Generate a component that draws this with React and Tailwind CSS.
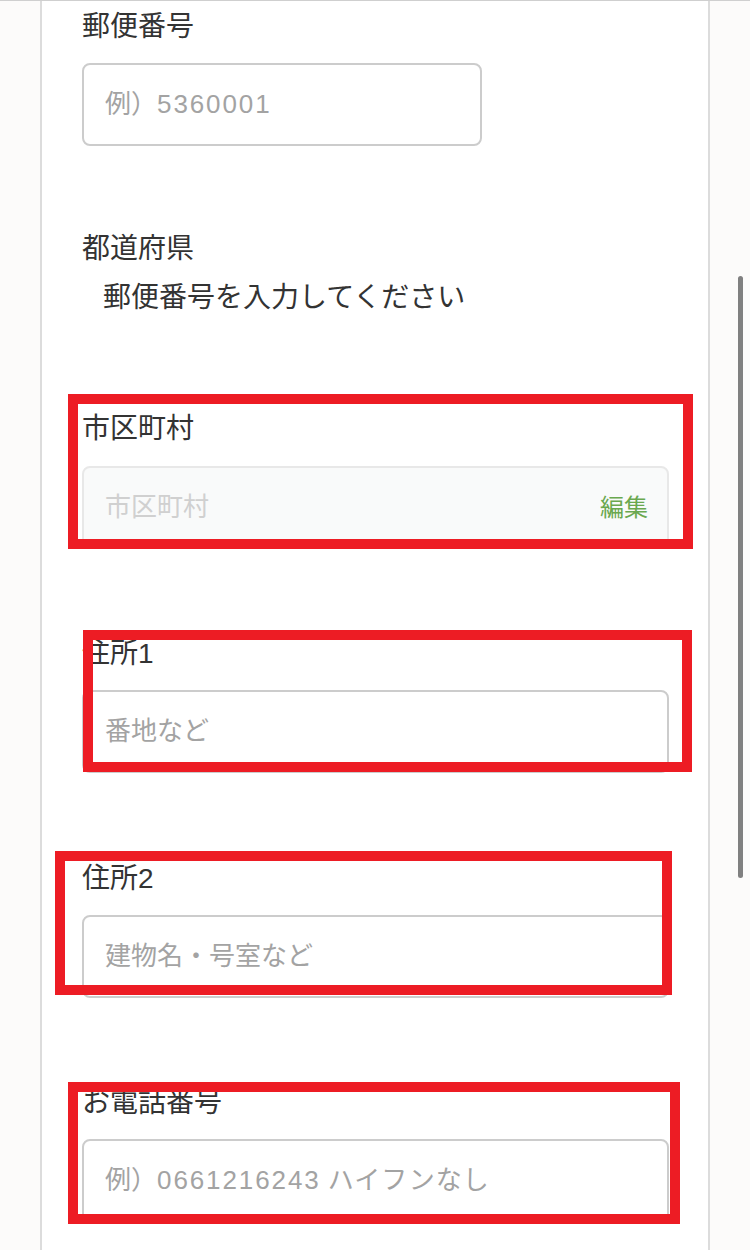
import React from "react";

const font = { fontFamily: '"Liberation Sans", "Noto Sans CJK JP", sans-serif' };

function Num({ children }) {
  return <span className="tracking-[1.9px]">{children}</span>;
}

function Field({ label, placeholder, className = "", mb = "mb-[85px]" }) {
  return (
    <div className={mb}>
      <div className="h-[40px] leading-[40px] text-[28px] text-[#333333]">{label}</div>
      <div
        className={`mt-[16px] h-[83px] flex items-center rounded-[8px] border-2 border-[#cccccc] bg-white pl-[21px] text-[26px] text-[#a3a3a3] ${className}`}
      >
        <span>{placeholder}</span>
      </div>
    </div>
  );
}

export default function App() {
  return (
    <div
      className="relative w-[750px] h-[1250px] overflow-hidden bg-[#fcfbfa] border-t border-[#cfcfcf]"
      style={font}
    >
      <div className="ml-[40px] w-[670px] h-full bg-white border-x-2 border-[#dcdcdc] pl-[40px] pr-[39px] pt-[6px]">
        <Field
          label="郵便番号"
          placeholder={<>例）<Num>5360001</Num></>}
          className="w-[400px]"
          mb="mb-[83px]"
        />

        <div className="mb-[91px]">
          <div className="h-[40px] leading-[40px] text-[28px] text-[#333333]">都道府県</div>
          <div className="mt-[9px] h-[40px] leading-[40px] pl-[21px] text-[28px] text-[#333333]">
            郵便番号を入力してください
          </div>
        </div>

        <div className="mb-[85px]">
          <div className="h-[40px] leading-[40px] text-[28px] text-[#333333]">市区町村</div>
          <div className="mt-[17px] h-[83px] flex items-center justify-between rounded-[8px] border-2 border-[#e8e8e8] bg-[#f9fafa] pl-[21px] pr-[19px]">
            <span className="text-[26px] text-[#d0d0d0]">市区町村</span>
            <span className="text-[24px] text-[#6aa84f]">編集</span>
          </div>
        </div>

        <Field label="住所1" placeholder="番地など" mb="mb-[86px]" />
        <Field label="住所2" placeholder="建物名・号室など" mb="mb-[85px]" />
        <Field
          label="お電話番号"
          placeholder={<>例）<Num>0661216243</Num> <span className="tracking-[1px]">ハイフンなし</span></>}
          mb="mb-0"
        />
      </div>

      {/* scrollbar */}
      <div className="absolute left-[738px] top-[275px] w-[5px] h-[602px] rounded-full bg-[#808080]" />

      {/* red annotation boxes */}
      <div className="absolute left-[68px] top-[393px] w-[625px] h-[155px] border-[10px] border-[#ed1c24]" />
      <div className="absolute left-[83px] top-[629px] w-[609px] h-[142px] border-[10px] border-[#ed1c24]" />
      <div className="absolute left-[55px] top-[850px] w-[617px] h-[144px] border-[10px] border-[#ed1c24]" />
      <div className="absolute left-[68px] top-[1081px] w-[612px] h-[142px] border-[10px] border-[#ed1c24]" />
    </div>
  );
}
